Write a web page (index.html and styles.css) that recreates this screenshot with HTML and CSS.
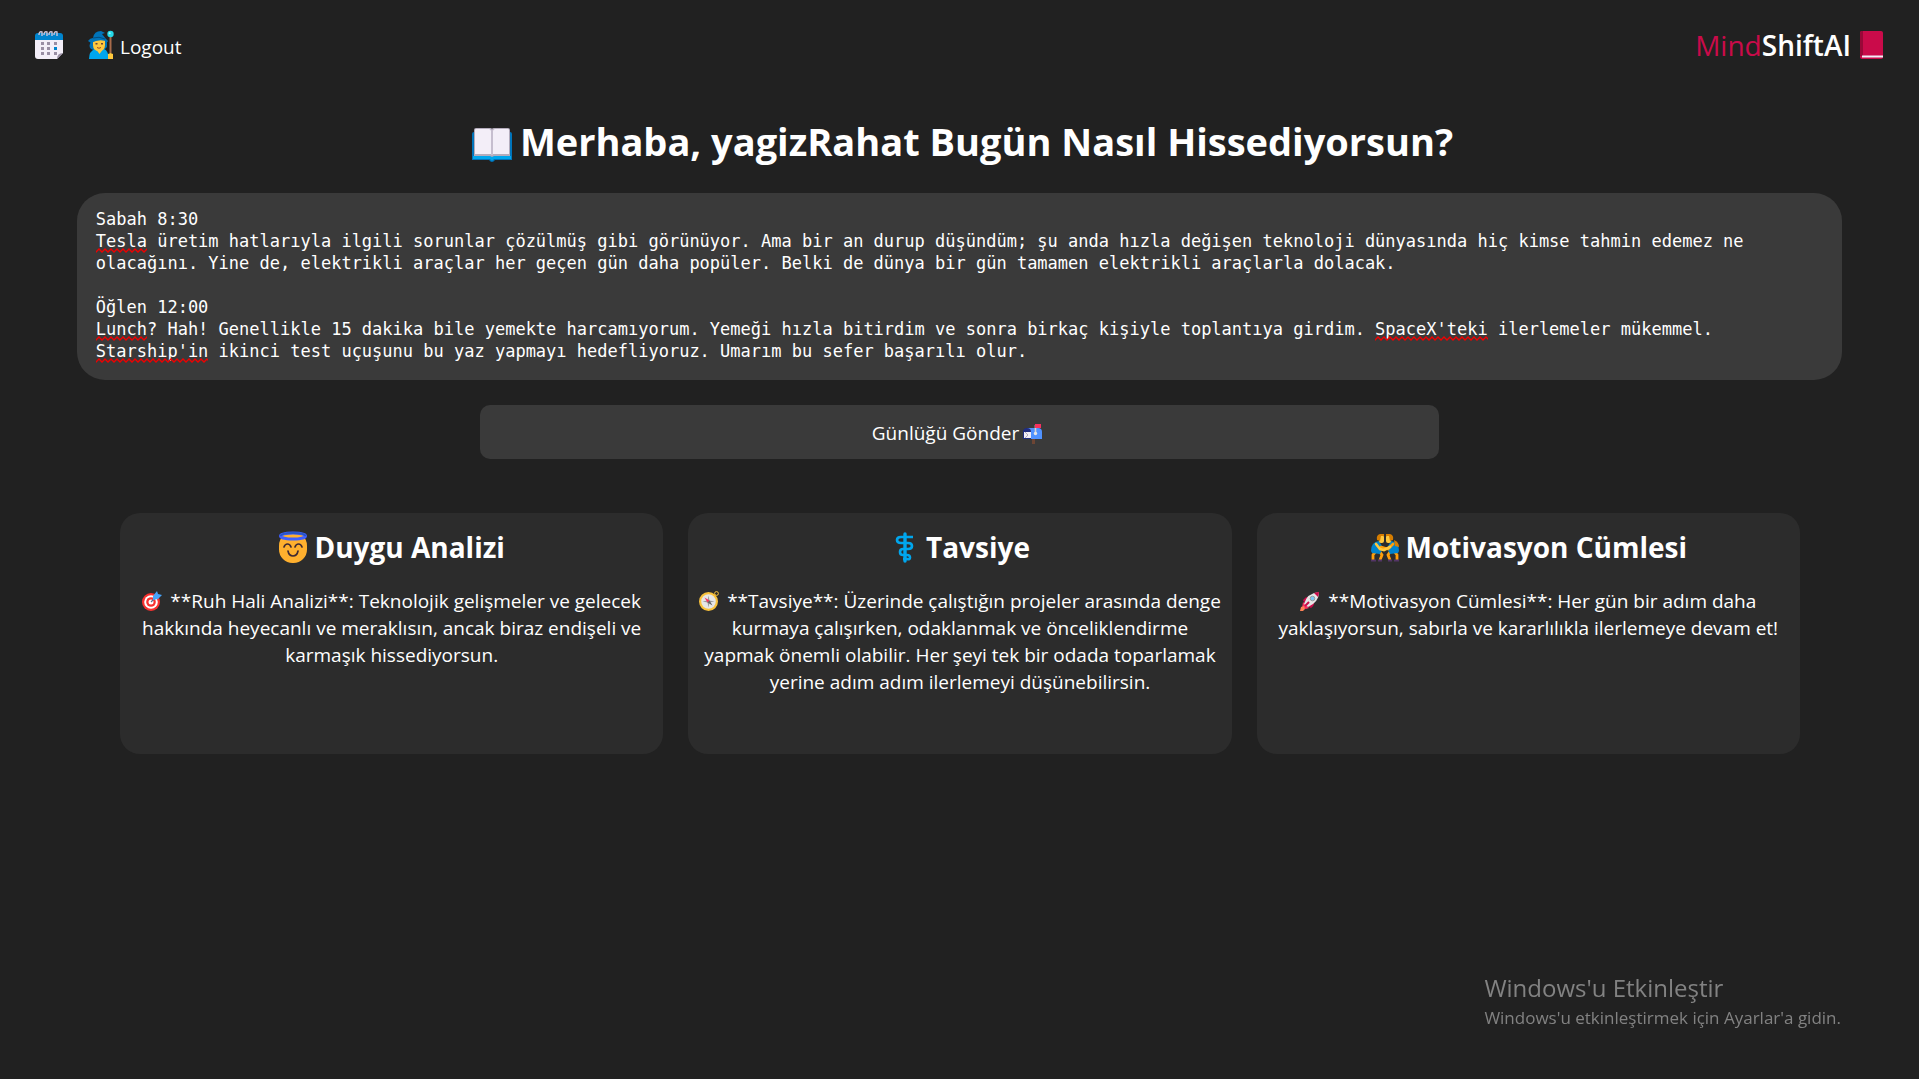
FILE: index.html
```html
<!DOCTYPE html>
<html lang="tr">
<head>
  <meta charset="utf-8">
  <meta name="viewport" content="width=device-width, initial-scale=1">
  <title>MindShiftAI</title>
  <link rel="stylesheet" href="styles.css">
</head>
<body>
  <header class="topbar">
    <nav class="nav">
      <a class="nav-link" href="#calendar" aria-label="Takvim">
        <svg class="icon-calendar" viewBox="0 0 30 30" aria-hidden="true">
          <path d="M1 9h28v14l-6 6H4q-3 0-3-3z" fill="#f3eef8"/>
          <path d="M23 29q0-6 6-6z" fill="#998ea4"/>
          <path d="M1 10V6q0-3 3-3h22q3 0 3 3v4z" fill="#0084ce"/>
          <path d="M5 5q0-4 3-3v4M10 5q0-4 3-3v4M15 5q0-4 3-3v4M20 5q0-4 3-3v4" fill="none" stroke="#cdc4d6" stroke-width="1.4"/>
          <path d="M7 12h3v3H7zM13 12h3v3h-3zM20 12h3v3h-3zM7 17h3v3H7zM13 17h3v3h-3zM7 22h3v3H7zM13 22h3v3h-3zM20 22h3v3h-3z" fill="#998ea4"/>
          <path d="M20 17h3v3h-3z" fill="#0084ce"/>
        </svg>
      </a>
      <a class="nav-link" href="#logout">
        <svg class="icon-mage" viewBox="0 0 26 30" aria-hidden="true">
          <path d="M3 12q-3 4 0 7l5 2h7l4-4V10z" fill="#0074ba"/>
          <path d="M1 29q0-8 6-10h9q4 1 5 10z" fill="#00a6ed"/>
          <path d="M7 18h9l-4.500 6z" fill="#ffc83d"/>
          <path d="M5 10h12v5q0 6-6 6t-6-6z" fill="#ffc83d"/>
          <path d="M9 17.500q2 1.500 4 0" stroke="#a14a20" fill="none"/>
          <path d="M7.500 13h2v1.500h-2zM13 13h2v1.500h-2z" fill="#6d4534"/>
          <path d="M0 11q2-3 5-3Q6 1 13 1l4 2-3 1 4 5q2 1 2 3-8-4-17 1z" fill="#0074ba"/>
          <path d="M5 8q6-2 12 1" stroke="#004e80" fill="none"/>
          <path d="M22.500 6v17" stroke="#a86b4a" stroke-width="2"/>
          <circle cx="22.500" cy="4" r="3.200" fill="#26d9e8"/>
          <circle cx="21.700" cy="3.200" r="1" fill="#a5f5fa"/>
          <path d="M20 24l2.500-1 2.500 1v5h-5z" fill="#ffc83d"/>
        </svg>
        <span class="nav-text">Logout</span>
      </a>
    </nav>
    <a class="brand" href="#home">
      <span><span class="brand-accent">Mind</span>ShiftAI</span>
      <svg class="icon-book" viewBox="0 0 24 28" aria-hidden="true">
        <rect x="1" width="23" height="28" rx="2" fill="#ca0b4a"/>
        <path d="M1 2q0-2 2-2h1v25H1z" fill="#990838"/>
        <path d="M3 24.500h21v2H3z" fill="#f3eef8"/>
      </svg>
    </a>
  </header>

  <main class="page">
    <h1 class="title">
      <svg class="icon-open" viewBox="0 0 40 34" aria-hidden="true">
        <path d="M0 6q0-2 2-2h36q2 0 2 2v26H23q-3 4-6 0H0z" fill="#0074ba"/>
        <path d="M1 28h38v3H22q-2 3-4 0H1z" fill="#00a6ed"/>
        <path d="M2 2q0-2 2-2h14q2 0 2 1 0-1 2-1h14q2 0 2 2v26H22l-2 1-2-1H2z" fill="#b4acbc"/>
        <path d="M3 2q0-1 1-1h13q2 0 2 2v23H3zM21 3q0-2 2-2h13q1 0 1 1v24H21z" fill="#f3eef8"/>
        <path d="M20 2v25" stroke="#cdc4d6" stroke-width="1.500"/>
      </svg>
      <span>Merhaba, yagizRahat Bugün Nasıl Hissediyorsun?</span>
    </h1>

    <form class="journal">
      <div class="editor">
        <textarea class="entry" rows="7" spellcheck="false" aria-label="Günlük">Sabah 8:30
Tesla üretim hatlarıyla ilgili sorunlar çözülmüş gibi görünüyor. Ama bir an durup düşündüm; şu anda hızla değişen teknoloji dünyasında hiç kimse tahmin edemez ne olacağını. Yine de, elektrikli araçlar her geçen gün daha popüler. Belki de dünya bir gün tamamen elektrikli araçlarla dolacak.

Öğlen 12:00
Lunch? Hah! Genellikle 15 dakika bile yemekte harcamıyorum. Yemeği hızla bitirdim ve sonra birkaç kişiyle toplantıya girdim. SpaceX'teki ilerlemeler mükemmel. Starship'in ikinci test uçuşunu bu yaz yapmayı hedefliyoruz. Umarım bu sefer başarılı olur.</textarea>
        <div class="marks" aria-hidden="true">
          <span class="mark" style="--line: 2; --col: 0; --len: 5"></span>
          <span class="mark" style="--line: 6; --col: 0; --len: 5"></span>
          <span class="mark" style="--line: 6; --col: 125; --len: 11"></span>
          <span class="mark" style="--line: 7; --col: 0; --len: 11"></span>
        </div>
      </div>
      <button class="send" type="button">
        <span>Günlüğü Gönder</span>
        <svg class="icon-small" viewBox="0 0 20 20" aria-hidden="true">
          <path d="M9 14h3v6H9z" fill="#6d4534"/>
          <path d="M4 4h11q4 0 4 4v7H4z" fill="#5092ff"/>
          <path d="M0 8q0-4 4-4t4 4v7H0z" fill="#212d7f"/>
          <path d="M1 8h7v6H1z" fill="#f3eef8"/>
          <path d="M2 8l3 3-3 3" fill="none" stroke="#b4acbc"/>
          <path d="M12.500 1v9" stroke="#d3d3d3" stroke-width="1.600"/>
          <circle cx="12.500" cy="9.500" r="1.700" fill="#e6e6e6"/>
          <path d="M12 0h6v4h-6z" fill="#f8315f"/>
        </svg>
      </button>
    </form>

    <section class="cards">
      <article class="card">
        <h2 class="card-title">
          <svg class="icon-head" viewBox="0 0 30 32" aria-hidden="true">
            <rect x="1" y="1" width="28" height="31" rx="13.500" fill="#ffb02e"/>
            <ellipse cx="15" cy="5" rx="12.500" ry="3" fill="#ffb02e" stroke="#3f5fff" stroke-width="3"/>
            <path d="M2.500 5q1-3 12.500-3t12.500 3" stroke="#2756c9" stroke-width="2" fill="none"/>
            <path d="M6 16q1-3 3.500-3t3.500 3M17 16q1-3 3.500-3t3.500 3M10 20q1 5 5 5t5-5" fill="none" stroke="#402a32" stroke-width="1.700" stroke-linecap="round"/>
          </svg>
          <span>Duygu Analizi</span>
        </h2>
        <p class="card-text"><svg class="icon-inline" viewBox="0 0 20 20" aria-hidden="true">
            <circle cx="9" cy="11" r="9" fill="#f8312f"/>
            <circle cx="9" cy="11" r="6.800" fill="#fff"/>
            <circle cx="9" cy="11" r="4.800" fill="#f8312f"/>
            <circle cx="9" cy="11" r="2.500" fill="#fff"/>
            <path d="M9 11l7-7" stroke="#5a6c8c" stroke-width="1.200"/>
            <path d="M11 9V5l4-5 1 3 4 1-4 4z" fill="#46a4fb"/>
          </svg>**Ruh Hali Analizi**: Teknolojik gelişmeler ve gelecek hakkında heyecanlı ve meraklısın, ancak biraz endişeli ve karmaşık hissediyorsun.</p>
      </article>

      <article class="card">
        <h2 class="card-title">
          <svg class="icon-head" viewBox="0 0 30 32" aria-hidden="true">
            <path d="M15 3v27" stroke="#00a6ed" stroke-width="3.400" stroke-linecap="round"/>
            <path d="M23 6H11q-4 0-4 3t4 3h7q4 0 4 3t-4 3h-5q-3 0-3 3t3 3h4q3 0 3 2.500T17 28h-4" fill="none" stroke="#00a6ed" stroke-width="2.600"/>
          </svg>
          <span>Tavsiye</span>
        </h2>
        <p class="card-text"><svg class="icon-inline" viewBox="0 0 20 20" aria-hidden="true">
            <circle cx="17.500" cy="2.500" r="1.900" fill="none" stroke="#f9c23c"/>
            <circle cx="9.500" cy="10.500" r="8.400" fill="#e6e6e6" stroke="#f9c23c" stroke-width="2.200"/>
            <path d="M9.500 4.500l1 5 5 1-5 1-1 5-1-5-5-1 5-1z" fill="#9b9b9b"/>
            <path d="M5.500 6.500l5 3-2 2z" fill="#f8315f"/>
            <path d="M13.500 14.500l-5-3 2-2z" fill="#636363"/>
          </svg>**Tavsiye**: Üzerinde çalıştığın projeler arasında denge kurmaya çalışırken, odaklanmak ve önceliklendirme yapmak önemli olabilir. Her şeyi tek bir odada toparlamak yerine adım adım ilerlemeyi düşünebilirsin.</p>
      </article>

      <article class="card">
        <h2 class="card-title">
          <svg class="icon-head" viewBox="0 0 30 32" aria-hidden="true">
            <path d="M6 20l-3 4v5M10 21l2 3-2 5M24 20l3 4v5M20 21l-2 3 2 5" fill="none" stroke="#ff9f0a" stroke-width="2.800"/>
            <path d="M9 10q-8 1-8 10l1 2 8 1 3-6zM21 10q8 1 8 10l-1 2-8 1-3-6z" fill="#0084ce"/>
            <path d="M24 9q5 2 5 7l-4-1z" fill="#d67d00"/>
            <rect x="9" y="4" width="5" height="8" rx="2" fill="#ffc83d"/>
            <rect x="16" y="4" width="5" height="8" rx="2" fill="#ffc83d"/>
            <path d="M7 9q-1-5 3-6h4v2h-3l-1 5zM23 9q1-5-3-6h-4v2h3l1 5z" fill="#d67d00"/>
            <path d="M23 13l-5 5-7-2" fill="none" stroke="#ff9f0a" stroke-width="2.600" stroke-linecap="round"/>
            <path d="M6 13l4 5 4 1 6-3" fill="none" stroke="#ffc83d" stroke-width="2.600" stroke-linecap="round"/>
            <path d="M1 29.500h5M8 29.500h4M18 29.500h4M24 29.500h5" stroke="#533566" stroke-width="2"/>
          </svg>
          <span>Motivasyon Cümlesi</span>
        </h2>
        <p class="card-text"><svg class="icon-inline" viewBox="0 0 20 20" aria-hidden="true">
            <path d="M3 9q3-4 7-3l-5 7zM11 17q4-3 3-7l-7 5z" fill="#ca0b4a"/>
            <path d="M3 11l6 6-3 1-4-1z" fill="#f8315f"/>
            <path d="M1 16l3-1 1 3-2 2H0z" fill="#ff8257"/>
            <path d="M4 13Q7 2 19 1q0 10-11 15z" fill="#e6e6e6"/>
            <path d="M14 2q3-1 5-1 0 2-1 5z" fill="#ca0b4a"/>
            <circle cx="12.500" cy="7.500" r="2.300" fill="#7ac7f5" stroke="#9b9b9b"/>
            <path d="M5 15l4-4" stroke="#ca0b4a" stroke-width="2"/>
          </svg>**Motivasyon Cümlesi**: Her gün bir adım daha yaklaşıyorsun, sabırla ve kararlılıkla ilerlemeye devam et!</p>
      </article>
    </section>
  </main>

  <aside class="activation">
    <p class="activation-title">Windows'u Etkinleştir</p>
    <p class="activation-text">Windows'u etkinleştirmek için Ayarlar'a gidin.</p>
  </aside>
</body>
</html>
```

FILE: styles.css
```css
* {
  box-sizing: border-box;
}

body {
  margin: 0;
  min-height: 100vh;
  background: #212121;
  color: #fff;
  font-family: "Open Sans", "Noto Sans", sans-serif;
  font-size: 19px;
  line-height: 27px;
}

h1,
h2,
p {
  margin: 0;
}

svg {
  flex: none;
}

/* Top bar */

.topbar {
  display: flex;
  justify-content: space-between;
  align-items: center;
  height: 90px;
  padding: 0 36px 0 34px;
}

.nav {
  display: flex;
  gap: 24px;
}

.nav-link,
.brand {
  display: flex;
  align-items: center;
  color: #fff;
  text-decoration: none;
}

.nav-link {
  gap: 6px;
}

.nav-text {
  padding-top: 5px;
}

.brand {
  gap: 8px;
  font-size: 28px;
  font-weight: 600;
}

.brand-accent {
  color: #ca0b4a;
  font-weight: 400;
}

.icon-calendar {
  width: 30px;
  height: 30px;
}

.icon-mage {
  width: 26px;
  height: 30px;
}

.icon-book {
  width: 24px;
  height: 28px;
}

/* Journal */

.title {
  display: flex;
  justify-content: center;
  align-items: center;
  gap: 8px;
  padding: 24px 0 24px 6px;
  font-size: 38px;
  line-height: 55px;
}

.icon-open {
  width: 40px;
  height: 34px;
  margin-top: 6px;
}

.journal {
  display: flex;
  flex-direction: column;
  align-items: center;
  gap: 25px;
}

.editor {
  position: relative;
  width: 92%;
  font: 17px/22px "DejaVu Sans Mono", monospace;
}

.entry {
  display: block;
  width: 100%;
  height: 187px;
  padding: 15px 60px 15px 19px;
  border: 0;
  border-radius: 28px;
  outline: 0;
  background: #3a3a3a;
  color: #fff;
  font: inherit;
  resize: none;
}

.marks {
  position: absolute;
  inset: 15px 19px;
  pointer-events: none;
}

.mark {
  position: absolute;
  top: calc(var(--line) * 22px - 4px);
  left: calc(var(--col) * 1ch);
  width: calc(var(--len) * 1ch);
  height: 5px;
  background: url("data:image/svg+xml,%3Csvg xmlns='http://www.w3.org/2000/svg' width='6' height='5'%3E%3Cpath d='M-1 3L0 4 3 1 6 4 7 3' fill='none' stroke='%23f00000' stroke-width='1.400'/%3E%3C/svg%3E") repeat-x;
}

.send {
  display: flex;
  justify-content: center;
  align-items: center;
  gap: 4px;
  width: 50%;
  height: 54px;
  padding: 3px 4px 0 0;
  border: 0;
  border-radius: 10px;
  background: #3a3a3a;
  color: #fff;
  font: inherit;
}

.icon-small {
  width: 20px;
  height: 20px;
}

/* Result cards */

.cards {
  display: grid;
  grid-template-columns: repeat(3, 1fr);
  gap: 25px;
  margin: 54px 119px 0 120px;
}

.card {
  min-height: 241px;
  padding: 14px 10px;
  border-radius: 20px;
  background: #2c2c2c;
  text-align: center;
}

.card-title {
  display: flex;
  justify-content: center;
  align-items: center;
  gap: 6px;
  margin-bottom: 21px;
  font-size: 28px;
  line-height: 40px;
}

.icon-head {
  width: 30px;
  height: 32px;
}

.icon-inline {
  width: 20px;
  height: 20px;
  margin-right: 8px;
  vertical-align: -3px;
}

/* System notice over the page corner */

.activation {
  position: fixed;
  right: 78px;
  bottom: 48px;
  color: #828282;
}

.activation-title {
  font-size: 24px;
  line-height: 32px;
}

.activation-text {
  font-size: 17px;
}
```
